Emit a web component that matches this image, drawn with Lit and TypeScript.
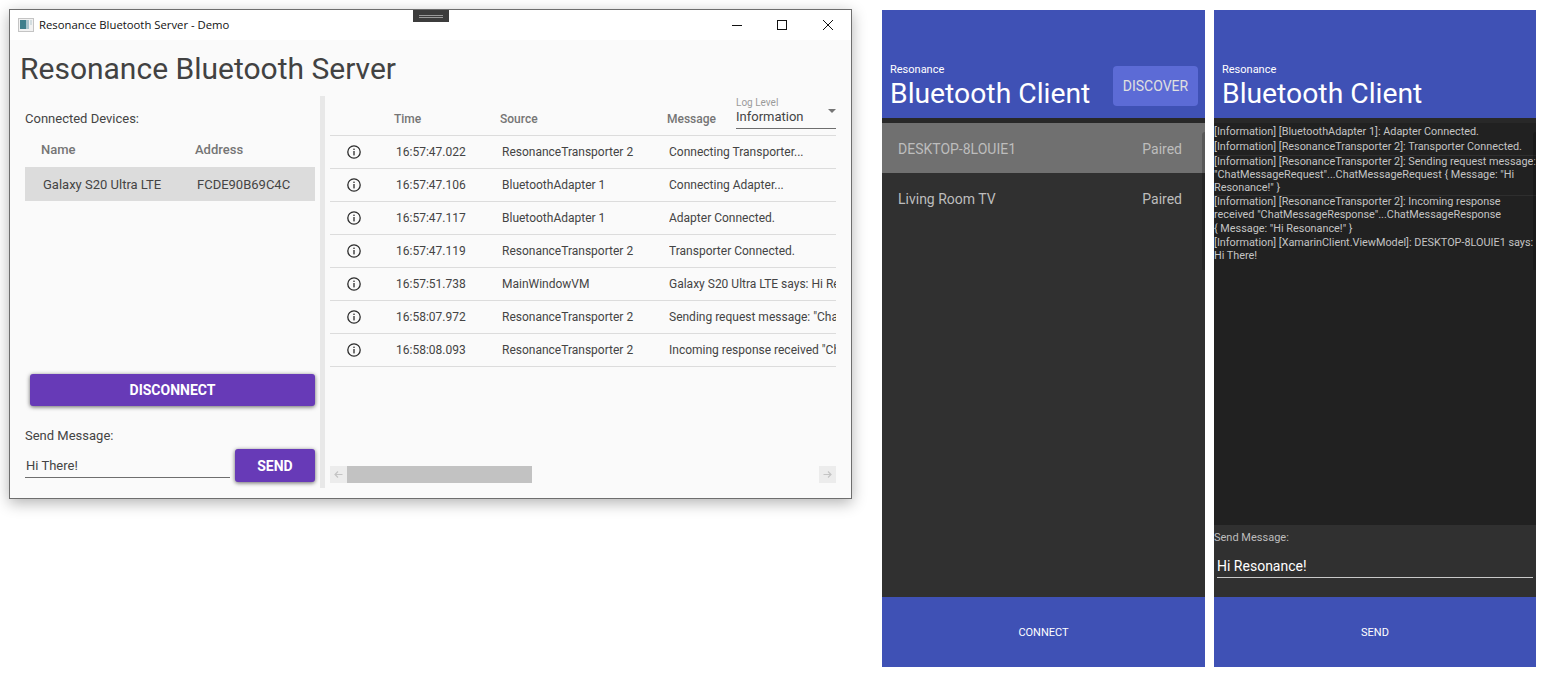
import { css, html, LitElement } from "lit";
import { customElement } from "lit/decorators.js";

const logRows = [
    ["16:57:47.022", "ResonanceTransporter 2", "Connecting Transporter..."],
    ["16:57:47.106", "BluetoothAdapter 1", "Connecting Adapter..."],
    ["16:57:47.117", "BluetoothAdapter 1", "Adapter Connected."],
    ["16:57:47.119", "ResonanceTransporter 2", "Transporter Connected."],
    ["16:57:51.738", "MainWindowVM", "Galaxy S20 Ultra LTE says: Hi Resonance!"],
    ["16:58:07.972", "ResonanceTransporter 2", 'Sending request message: "ChatMessageRequest"'],
    ["16:58:08.093", "ResonanceTransporter 2", 'Incoming response received "ChatMessageResponse"'],
];

const phoneLog = [
    ["[Information] [BluetoothAdapter 1]: Adapter Connected."],
    ["[Information] [ResonanceTransporter 2]: Transporter Connected."],
    [
        "[Information] [ResonanceTransporter 2]: Sending request message:",
        '"ChatMessageRequest"...ChatMessageRequest { Message: "Hi',
        'Resonance!" }',
    ],
    [
        "[Information] [ResonanceTransporter 2]: Incoming response",
        'received "ChatMessageResponse"...ChatMessageResponse',
        '{ Message: "Hi Resonance!" }',
    ],
    ["[Information] [XamarinClient.ViewModel]: DESKTOP-8LOUIE1 says:", "Hi There!"],
];

const infoIcon = html`<svg class="info" viewBox="0 0 14 14" width="14" height="14">
    <circle cx="7" cy="7" r="6.2" fill="none" stroke="#2b2b2b" stroke-width="1.3"></circle>
    <rect x="6.35" y="6" width="1.3" height="4.4" fill="#2b2b2b"></rect>
    <rect x="6.35" y="3.6" width="1.3" height="1.4" fill="#2b2b2b"></rect>
</svg>`;

const arrowIcon = (d: string) => html`<svg viewBox="0 0 17 17" width="17" height="17">
    <path d=${d} fill="none" stroke="#c4c4c4" stroke-width="1.2"></path>
</svg>`;

@customElement("app-root")
class AppRootElement extends LitElement {
    renderWindow() {
        return html`
        <div class="window">
            <div class="notch"><span></span></div>
            <div class="titlebar">
                <svg class="app-icon" viewBox="0 0 16 14" width="16" height="14">
                    <rect x="0.5" y="0.5" width="15" height="13" fill="#f2f2f2" stroke="#c4c4c4"></rect>
                    <rect x="2" y="2" width="6" height="9" fill="#3f7f8c"></rect>
                    <rect x="8" y="2" width="3" height="9" fill="#a9c4cc"></rect>
                    <rect x="12" y="2" width="2" height="5" fill="#d3dde0"></rect>
                </svg>
                <span class="wintitle">Resonance Bluetooth Server - Demo</span>
                <svg class="controls" viewBox="0 0 112 12" width="112" height="12">
                    <path d="M11 6.5H21" stroke="#111" fill="none"></path>
                    <rect x="56.5" y="1.5" width="9" height="9" stroke="#111" fill="none"></rect>
                    <path d="M102 1L112 11M112 1L102 11" stroke="#111" fill="none"></path>
                </svg>
            </div>
            <div class="winbody">
                <h1>Resonance Bluetooth Server</h1>
                <div class="panes">
                    <div class="left">
                        <div class="label connected">Connected Devices:</div>
                        <div class="devhead"><span>Name</span><span>Address</span></div>
                        <div class="devrow"><span>Galaxy S20 Ultra LTE</span><span>FCDE90B69C4C</span></div>
                        <div class="spacer"></div>
                        <button class="primary disconnect">DISCONNECT</button>
                        <div class="label sendlabel">Send Message:</div>
                        <div class="sendrow">
                            <div class="field">Hi There!</div>
                            <button class="primary send">SEND</button>
                        </div>
                    </div>
                    <div class="splitter"></div>
                    <div class="right">
                        <div class="loghead">
                            <span class="h-time">Time</span>
                            <span class="h-source">Source</span>
                            <span class="h-message">Message</span>
                            <div class="select">
                                <div class="select-label">Log Level</div>
                                <div class="select-value">Information</div>
                                <i class="caret"></i>
                            </div>
                        </div>
                        ${logRows.map(
                            (r) => html`<div class="logrow">
                                <span class="cell-icon">${infoIcon}</span>
                                <span>${r[0]}</span>
                                <span>${r[1]}</span>
                                <span class="msg">${r[2]}</span>
                            </div>`
                        )}
                        <div class="spacer"></div>
                        <div class="hscroll">
                            <span class="arrow">${arrowIcon("M12.5 8.5H5M8 5.5L5 8.5L8 11.5")}</span>
                            <div class="thumb"></div>
                            <div class="spacer"></div>
                            <span class="arrow">${arrowIcon("M4.5 8.5H12M9 5.5L12 8.5L9 11.5")}</span>
                        </div>
                    </div>
                </div>
            </div>
        </div>`;
    }

    renderHeader(withButton: boolean) {
        return html`
        <div class="phead">
            <div class="ptitle">
                <div class="small">Resonance</div>
                <div class="big">Bluetooth Client</div>
            </div>
            ${withButton ? html`<div class="discover">DISCOVER</div>` : ""}
        </div>
        <div class="pstrip"></div>`;
    }

    render() {
        return html`
        <div class="page">
            ${this.renderWindow()}
            <div class="phone first">
                ${this.renderHeader(true)}
                <div class="plist">
                    <div class="pitem selected"><span>DESKTOP-8LOUIE1</span><span>Paired</span></div>
                    <div class="pitem"><span>Living Room TV</span><span>Paired</span></div>
                    <i class="indicator"></i>
                </div>
                <div class="pfoot">CONNECT</div>
            </div>
            <div class="phone second">
                ${this.renderHeader(false)}
                <div class="plog">
                    ${phoneLog.map(
                        (entry) => html`<div class="entry">${entry.map((l) => html`<div>${l}</div>`)}</div>`
                    )}
                    <i class="indicator"></i>
                </div>
                <div class="psend">
                    <div class="psend-label">Send Message:</div>
                    <div class="psend-field">Hi Resonance!</div>
                </div>
                <div class="pfoot">SEND</div>
            </div>
        </div>
    `;
    }

    static styles = css`
    :host{
        display: block;
        width: 1550px;
        height: 682px;
        background: white;
        font-family: Roboto, "Liberation Sans", sans-serif;
    }
    .page{
        display: flex;
        align-items: flex-start;
        padding: 9px 0 0 9px;
    }
    .spacer{
        flex: 1;
    }

    /* desktop window */
    .window{
        position: relative;
        width: 843px;
        height: 490px;
        box-sizing: border-box;
        border: 1px solid #6e6e6e;
        background: #fafafa;
        box-shadow: 0 4px 14px rgba(0,0,0,0.3);
        display: flex;
        flex-direction: column;
    }
    .notch{
        position: absolute;
        top: 0;
        left: 403px;
        width: 36px;
        height: 12px;
        background: #3c3c3c;
        display: flex;
        align-items: center;
        justify-content: center;
    }
    .notch span{
        width: 24px;
        height: 3px;
        border-top: 1px solid #9a9a9a;
        border-bottom: 1px solid #9a9a9a;
        box-sizing: border-box;
    }
    .titlebar{
        height: 30px;
        box-sizing: border-box;
        background: white;
        display: flex;
        align-items: center;
        padding-left: 8px;
        flex: none;
    }
    .app-icon{
        margin-right: 5px;
    }
    .wintitle{
        font-family: "Open Sans", sans-serif;
        font-size: 11.3px;
        color: #111;
        margin-top: -2px;
    }
    .controls{
        margin-left: auto;
        margin-right: 18px;
    }
    .winbody{
        flex: 1;
        display: flex;
        flex-direction: column;
        min-height: 0;
    }
    h1{
        margin: 0;
        font-weight: 400;
        font-size: 30px;
        line-height: 38px;
        padding: 10px 0 8px 10px;
        color: #424242;
    }
    .panes{
        flex: 1;
        display: flex;
        min-height: 0;
        margin-bottom: 10px;
        color: #444;
        font-size: 12px;
    }
    .left{
        width: 290px;
        padding-left: 15px;
        padding-right: 5px;
        display: flex;
        flex-direction: column;
    }
    .label{
        font-size: 13px;
        color: #444;
    }
    .connected{
        margin-top: 15px;
        line-height: 16px;
    }
    .devhead{
        display: flex;
        padding: 15px 0 0 16px;
        height: 40px;
        box-sizing: border-box;
        font-weight: 500;
        font-size: 13px;
        color: #757575;
        line-height: 16px;
    }
    .devhead span:first-child{
        width: 154px;
    }
    .devrow{
        display: flex;
        align-items: center;
        height: 34px;
        padding-left: 18px;
        background: #dcdcdc;
        font-size: 13px;
    }
    .devrow span:first-child{
        width: 154px;
    }
    button.primary{
        border: none;
        background: #673ab7;
        color: white;
        font-family: inherit;
        font-weight: 700;
        font-size: 14px;
        border-radius: 3px;
        box-shadow: 0 1px 4px rgba(0,0,0,0.6);
        padding: 0;
    }
    .disconnect{
        margin-left: 5px;
        height: 32px;
    }
    .sendlabel{
        margin-top: 22px;
        line-height: 16px;
    }
    .sendrow{
        display: flex;
        align-items: flex-end;
        gap: 5px;
        margin-top: 5px;
        margin-bottom: 6px;
    }
    .field{
        flex: 1;
        height: 25px;
        box-sizing: border-box;
        border-bottom: 1px solid #6e6e6e;
        padding-left: 1px;
        font-size: 13px;
        line-height: 25px;
        margin-bottom: 4px;
    }
    .send{
        width: 80px;
        height: 33px;
    }
    .splitter{
        width: 5px;
        background: #e8e8e8;
    }
    .right{
        width: 506px;
        margin-left: 5px;
        display: flex;
        flex-direction: column;
    }
    .loghead{
        height: 40px;
        box-sizing: border-box;
        border-bottom: 1px solid #dcdcdc;
        display: flex;
        font-weight: 500;
        color: #757575;
        line-height: 16px;
        flex: none;
    }
    .h-time, .h-source, .h-message{
        padding-top: 15px;
    }
    .h-time{
        margin-left: 64px;
        width: 106px;
    }
    .h-source{
        width: 167px;
    }
    .h-message{
        width: 69px;
    }
    .select{
        position: relative;
        width: 100px;
        height: 33px;
        padding-top: 1px;
        box-sizing: border-box;
        border-bottom: 1px solid #6e6e6e;
        font-weight: 400;
    }
    .select-label{
        font-size: 10px;
        line-height: 12px;
        color: #9a9a9a;
    }
    .select-value{
        font-size: 13px;
        line-height: 16px;
        color: #444;
    }
    .caret{
        position: absolute;
        top: 13px;
        right: 0;
        border-left: 4px solid transparent;
        border-right: 4px solid transparent;
        border-top: 4px solid #757575;
    }
    .logrow{
        height: 33px;
        box-sizing: border-box;
        border-bottom: 1px solid #dcdcdc;
        display: grid;
        grid-template-columns: 66px 106px 167px 1fr;
        align-items: center;
        white-space: nowrap;
        flex: none;
    }
    .cell-icon{
        padding-left: 17px;
        display: flex;
    }
    .msg{
        overflow: hidden;
    }
    .hscroll{
        display: flex;
        height: 17px;
        flex: none;
        margin-bottom: 5px;
    }
    .arrow{
        width: 17px;
        height: 17px;
        background: #ececec;
    }
    .thumb{
        width: 185px;
        background: #c2c2c2;
    }

    /* phones */
    .phone{
        height: 657px;
        margin-top: 1px;
        display: flex;
        flex-direction: column;
        background: #303030;
        color: white;
    }
    .first{
        width: 323px;
        margin-left: 30px;
    }
    .second{
        width: 322px;
        margin-left: 9px;
    }
    .phead{
        height: 108px;
        background: #3f51b5;
        display: flex;
        align-items: flex-end;
        padding-left: 8px;
        flex: none;
    }
    .ptitle{
        padding-bottom: 7px;
    }
    .small{
        font-size: 11px;
        line-height: 13px;
        margin-bottom: 1px;
    }
    .big{
        font-size: 28.3px;
        line-height: 34px;
    }
    .discover{
        margin-left: auto;
        margin-right: 7px;
        margin-bottom: 12px;
        width: 85px;
        height: 40px;
        border-radius: 4px;
        background: #5c6bd6;
        color: #e0e0e0;
        font-size: 14px;
        line-height: 40px;
        text-align: center;
    }
    .pstrip{
        height: 5px;
        background: #282828;
        flex: none;
    }
    .plist{
        position: relative;
        flex: 1;
    }
    .pitem{
        height: 50px;
        box-sizing: border-box;
        padding: 2px 23px 0 16px;
        display: flex;
        align-items: center;
        justify-content: space-between;
        font-size: 14px;
        color: #bdbdbd;
    }
    .selected{
        background: #707070;
    }
    .indicator{
        position: absolute;
        top: 9px;
        right: 0;
        width: 3px;
        height: 138px;
        border-top-left-radius: 3px;
        background: rgba(0,0,0,0.2);
    }
    .plog{
        position: relative;
        height: 402px;
        background: #212121;
        font-size: 10.85px;
        line-height: 13.3px;
        color: #c4c4c4;
        padding-top: 2px;
        box-sizing: border-box;
        white-space: nowrap;
        flex: none;
    }
    .entry{
        padding-bottom: 1.5px;
    }
    .entry:nth-child(2), .entry:nth-child(3){
        box-shadow: 0 1px 0 #2e2e2e;
    }
    .entry:nth-child(3){
        padding-bottom: 0.5px;
    }
    .entry:nth-child(4){
        padding-bottom: 1px;
    }
    .psend{
        flex: 1;
    }
    .psend-label{
        font-size: 11px;
        line-height: 13px;
        color: #bdbdbd;
        margin-top: 6px;
    }
    .psend-field{
        margin: 12px 3px 0 3px;
        height: 22px;
        box-sizing: border-box;
        border-bottom: 1px solid #c8c8c8;
        font-size: 14px;
        line-height: 20px;
    }
    .pfoot{
        height: 70px;
        box-sizing: border-box;
        padding-top: 2px;
        flex: none;
        background: #3f51b5;
        font-size: 11px;
        line-height: 68px;
        text-align: center;
    }
  `;
}
